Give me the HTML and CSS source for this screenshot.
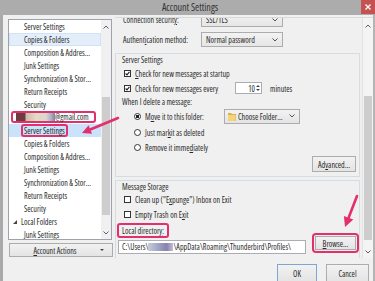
FILE: index.html
```html
<!DOCTYPE html>
<html>
  <head>
    <meta charset="utf-8">
    <title>Account Settings</title>
    <link rel="stylesheet" href="styles.css">
  </head>
  <body>
    <div class="window">
      <div class="titlebar">
        <span class="title">Account Settings</span>
        <span class="close">
          <svg width="6" height="6" viewBox="0 0 6 6"><path d="M.5.5l5 5M5.5.5l-5 5" stroke="#fff" stroke-width="1.3"/></svg>
        </span>
      </div>

      <div class="frame">
        <div class="main">
          <div class="side">
            <div class="tree">
              <ul class="items">
                <li class="sub">Server Settings</li>
                <li class="sub hover">Copies &amp; Folders</li>
                <li class="sub">Composition &amp; Addres...</li>
                <li class="sub">Junk Settings</li>
                <li class="sub">Synchronization &amp; Stor...</li>
                <li class="sub">Return Receipts</li>
                <li class="sub">Security</li>
                <li class="account"><span class="mark acc"><span class="blur"></span>@gmail.com</span></li>
                <li class="sub selected"><span class="mark">Server Settings</span></li>
                <li class="sub">Copies &amp; Folders</li>
                <li class="sub">Composition &amp; Addres...</li>
                <li class="sub">Junk Settings</li>
                <li class="sub">Synchronization &amp; Stor...</li>
                <li class="sub">Return Receipts</li>
                <li class="sub">Security</li>
                <li class="root"><span class="twisty"></span>Local Folders</li>
                <li class="sub">Junk Settings</li>
              </ul>
              <div class="sbar">
                <div class="arrow up"><svg width="6" height="4" viewBox="0 0 6 4"><path d="M.5 3.5 3 1l2.5 2.5" fill="none" stroke="#606060"/></svg></div>
                <div class="track"><div class="thumb t-tree"></div></div>
                <div class="arrow dn"><svg width="6" height="4" viewBox="0 0 6 4"><path d="M.5.5 3 3 5.5.5" fill="none" stroke="#606060"/></svg></div>
              </div>
            </div>
            <button class="btn actions"><span class="lbl-c"><u>A</u>ccount Actions</span><span class="caret"></span></button>
          </div>

          <div class="pane">
            <div class="content">
              <div class="inner">
                <div class="row">
                  <span class="lbl">Connection securit<u>y</u>:</span>
                  <span class="select">SSL/TLS<svg width="6" height="4" viewBox="0 0 6 4"><path d="M.5.5 3 3 5.5.5" fill="none" stroke="#555"/></svg></span>
                </div>
                <div class="row">
                  <span class="lbl">Authent<u>i</u>cation method:</span>
                  <span class="select">Normal password<svg width="6" height="4" viewBox="0 0 6 4"><path d="M.5.5 3 3 5.5.5" fill="none" stroke="#555"/></svg></span>
                </div>

                <section class="group g1">
                  <div class="legend">Server Settings</div>
                  <div class="check c1"><span class="box on"><svg width="5" height="5" viewBox="0 0 5 5"><path d="M.6 2.5 2 3.9 4.4.9" fill="none" stroke="#222" stroke-width="1.1"/></svg></span><u>C</u>heck for new messages at startup</div>
                  <div class="check c2">
                    <span class="box on"><svg width="5" height="5" viewBox="0 0 5 5"><path d="M.6 2.5 2 3.9 4.4.9" fill="none" stroke="#222" stroke-width="1.1"/></svg></span>
                    <span class="every">Check for new messages ever<u>y</u></span>
                    <span class="spin"><span class="num">10</span><span class="spins"><i class="s-up"></i><i class="s-dn"></i></span></span>
                    <span class="unit">minutes</span>
                  </div>
                  <div class="when">When I delete a message:</div>
                  <div class="radio r1">
                    <span class="dot on"></span>
                    <span class="move">M<u>o</u>ve it to this folder:</span>
                    <span class="picker">
                      <svg width="8" height="9" viewBox="0 0 8 9"><path d="M0 1h3l1 1h4v7H0z" fill="#d9b24a"/><path d="M0 3h7.5v6H0z" fill="#f3d47c"/></svg>
                      <span class="pick-t">Choose Folder...</span>
                      <svg width="6" height="4" viewBox="0 0 6 4"><path d="M.5.5 3 3 5.5.5" fill="none" stroke="#555"/></svg>
                    </span>
                  </div>
                  <div class="radio r2"><span class="dot"></span>Just mar<u>k</u> it as deleted</div>
                  <div class="radio r3"><span class="dot"></span>Remove it imme<u>d</u>iately</div>
                  <div class="adv-row"><button class="btn adv">Ad<u>v</u>anced...</button></div>
                </section>

                <section class="group g2">
                  <div class="legend">Message Storage</div>
                  <div class="check c3"><span class="box"></span>Clean up ("E<u>x</u>punge") Inbox on Exit</div>
                  <div class="check c4"><span class="box"></span>Empty Trash on E<u>x</u>it</div>
                  <div class="dir-row"><span class="mark dir">Local director<u>y</u>:</span></div>
                  <div class="path-row">
                    <span class="path">C:\Users\<span class="smudge"></span>\AppData\Roaming\Thunderbird\Profiles\</span>
                    <span class="mark browse-wrap"><button class="btn browse"><u>B</u>rowse...</button></span>
                  </div>
                </section>
              </div>
            </div>
            <div class="sbar wide">
              <div class="arrow up"><svg width="6" height="4" viewBox="0 0 6 4"><path d="M.5 3.5 3 1l2.5 2.5" fill="none" stroke="#606060"/></svg></div>
              <div class="track"><div class="thumb t-pane"></div></div>
              <div class="arrow dn"><svg width="6" height="4" viewBox="0 0 6 4"><path d="M.5.5 3 3 5.5.5" fill="none" stroke="#606060"/></svg></div>
            </div>
          </div>
        </div>

        <div class="footer">
          <button class="btn ok">OK</button>
          <button class="btn cancel">Cancel</button>
        </div>
      </div>

      <!-- annotation arrows drawn over the dialog -->
      <svg class="notes" width="375" height="281" viewBox="0 0 375 281">
        <path d="M118 118 90.3 129.5" stroke="#e3306c" stroke-width="2.6" stroke-linecap="round"/>
        <path d="M82 133 92 133.7 88.6 125.3z" fill="#e3306c"/>
        <path d="M357 196 348.6 217.7" stroke="#e3306c" stroke-width="2.6" stroke-linecap="round"/>
        <path d="M345 227 353.3 219.5 343.9 215.9z" fill="#e3306c"/>
      </svg>
    </div>
  </body>
</html>
```

FILE: styles.css
```css
  *{
    margin: 0;
    padding: 0;
    box-sizing: border-box;
  }
  body{
    width: 375px;
    height: 281px;
    overflow: hidden;
    background: #f0f0f0;
    font-family: "Open Sans", "Noto Sans", sans-serif;
    font-size: 8px;
    font-stretch: 80%;
    line-height: 11px;
    color: #2a2a2a;
  }
  button{
    font: inherit;
    color: inherit;
  }
  .window{
    position: relative;
    width: 375px;
    height: 281px;
    display: flex;
    flex-direction: column;
  }

  /* title bar */
  .titlebar{
    height: 15px;
    background: #acacac;
    display: flex;
  }
  .title{
    flex: 1;
    text-align: center;
    padding-left: 19px;
    font-size: 10px;
    line-height: 15px;
    color: #333;
  }
  .close{
    width: 14px;
    height: 14px;
    background: #c75050;
    display: flex;
    align-items: center;
    justify-content: center;
  }

  .frame{
    flex: 1;
    display: flex;
    flex-direction: column;
    border-left: 3px solid #a9a9a9;
    border-right: 2px solid #b4b4b4;
  }
  .main{
    display: flex;
    height: 246px;
    padding-top: 2px;
  }

  /* left side: account tree */
  .side{
    width: 110px;
    padding: 2px 0 0 5px;
  }
  .tree{
    width: 104px;
    height: 221px;
    border: 1px solid #9ea3ab;
    background: #fff;
    display: flex;
    overflow: hidden;
  }
  .items{
    width: 92px;
    list-style: none;
  }
  .items li{
    height: 13px;
    line-height: 13px;
    white-space: nowrap;
    overflow: hidden;
  }
  .sub{ padding-left: 15px; }
  .hover{
    background: #e3eefa;
    box-shadow: inset 0 0 0 1px #d0e2f5;
  }
  .selected{
    background: #cbe3fa;
    padding-left: 12px;
  }
  .mark{
    display: inline-block;
    border: 2px solid #e2306c;
    border-radius: 3px;
    line-height: 9px;
    padding: 0 1px;
  }
  .account{ padding-left: 2px; }
  .acc{
    width: 85px;
    padding-left: 3px;
    line-height: 8px;
    vertical-align: top;
    margin-top: 0;
  }
  .blur{
    display: inline-block;
    width: 39px;
    height: 8px;
    vertical-align: top;
    background: linear-gradient(to right, #6c3c42 0, #6c3c42 9px, #cbbcaa 10px, #e4dac5 20px, #d9d7cf 30px, #aab1c6 35px, #7b85aa 39px);
  }
  .root{ padding-left: 3px; }
  .twisty{
    display: inline-block;
    width: 0;
    height: 0;
    border-left: 4px solid transparent;
    border-bottom: 4px solid #444;
    margin: 0 4px 1px 1px;
  }

  /* scrollbars */
  .sbar{
    width: 10px;
    background: #f0f0f0;
    display: flex;
    flex-direction: column;
  }
  .arrow{
    height: 13px;
    display: flex;
    align-items: center;
    justify-content: center;
  }
  .track{ flex: 1; }
  .thumb{
    background: #cdcdcd;
    margin: 0 1px;
  }
  .t-tree{
    margin-top: 64px;
    height: 118px;
  }
  .wide{
    width: 11px;
    background: #f4f4f4;
    border-left: 1px solid #e2e2e2;
  }
  .wide .up{ height: 16px; }
  .wide .dn{ height: 12px; }
  .t-pane{
    margin-top: 62px;
    height: 144px;
  }

  /* buttons */
  .btn{
    border: 1px solid #acacac;
    background: linear-gradient(#f2f2f2, #e4e4e4);
    display: flex;
    align-items: center;
    justify-content: center;
    line-height: 11px;
  }
  .actions{
    width: 104px;
    height: 14px;
    margin: 3px 0 0 1px;
  }
  .lbl-c{
    flex: 1;
    text-align: center;
  }
  .caret{
    width: 0;
    height: 0;
    border-left: 2px solid transparent;
    border-right: 2px solid transparent;
    border-top: 2px solid #444;
    margin-right: 8px;
  }

  /* right side: settings pane */
  .pane{
    flex: 1;
    margin-left: 2px;
    height: 241px;
    border-top: 1px solid #dadada;
    display: flex;
  }
  .content{
    flex: 1;
    overflow: hidden;
  }
  .inner{ margin-top: -6px; }
  .row{
    display: flex;
    align-items: center;
    height: 15px;
    padding-left: 8px;
  }
  .row + .row{ margin-top: 5px; }
  .lbl{ width: 78px; white-space: nowrap; }
  .select{
    width: 82px;
    height: 15px;
    border: 1px solid #acacac;
    background: linear-gradient(#f3f3f3, #e6e6e6);
    display: flex;
    align-items: center;
    justify-content: space-between;
    padding: 0 4px;
  }

  .group{
    width: 245px;
    border: 1px solid #d5dde3;
    padding: 0 3px 4px 0;
  }
  .g1{ margin-top: 6px; }
  .g2{
    margin-top: 3px;
    height: 90px;
  }
  .legend{
    height: 12px;
    line-height: 12px;
    padding-left: 6px;
  }
  .g2 .legend{ height: 11px; }
  .check{
    display: flex;
    align-items: center;
    height: 14px;
    padding-left: 8px;
    white-space: nowrap;
  }
  .c2, .c4{ height: 16px; }
  .box{
    width: 7px;
    height: 7px;
    border: 1px solid #333;
    background: #fff;
    margin-right: 4px;
    display: flex;
    align-items: center;
    justify-content: center;
    flex-shrink: 0;
  }
  .every{ width: 100px; }
  .spin{
    width: 27px;
    height: 12px;
    border: 1px solid #abadb3;
    background: #fff;
    display: flex;
    align-items: center;
    justify-content: flex-end;
  }
  .spins{
    width: 6px;
    display: flex;
    flex-direction: column;
    align-items: center;
    gap: 2px;
  }
  .spins i{
    width: 0;
    height: 0;
    border-left: 2px solid transparent;
    border-right: 2px solid transparent;
  }
  .s-up{ border-bottom: 2px solid #444; }
  .s-dn{ border-top: 2px solid #444; }
  .unit{ margin-left: 8px; }
  .when{
    height: 12px;
    line-height: 12px;
    padding-left: 6px;
  }
  .radio{
    display: flex;
    align-items: center;
    height: 16px;
    padding-left: 18px;
    white-space: nowrap;
  }
  .r3{ height: 14px; }
  .dot{
    width: 7px;
    height: 7px;
    border: 1px solid #333;
    border-radius: 50%;
    background: #fff;
    margin-right: 4px;
    flex-shrink: 0;
  }
  .dot.on{ background: radial-gradient(circle, #222 0, #222 1.5px, #fff 2px); }
  .move{ width: 79px; }
  .picker{
    width: 76px;
    height: 15px;
    border: 1px solid #acacac;
    background: linear-gradient(#f2f2f2, #e4e4e4);
    display: flex;
    align-items: center;
    padding: 0 4px 0 3px;
  }
  .pick-t{
    flex: 1;
    margin-left: 2px;
  }
  .adv-row{
    display: flex;
    justify-content: flex-end;
    margin-top: 2px;
  }
  .adv{
    width: 44px;
    height: 16px;
  }
  .dir-row{
    height: 15px;
    margin-top: 1px;
    padding-left: 1px;
  }
  .dir{
    line-height: 11px;
    padding: 0 3px;
  }
  .path-row{
    display: flex;
    align-items: flex-end;
    height: 21px;
    margin: -5px -3px 0 0;
    padding-left: 2px;
  }
  .path{
    width: 188px;
    height: 14px;
    flex-shrink: 0;
    border: 1px solid #abadb3;
    background: #fff;
    line-height: 12px;
    padding-left: 3px;
    white-space: nowrap;
    overflow: hidden;
  }
  .smudge{
    display: inline-block;
    width: 25px;
    height: 8px;
    vertical-align: -1px;
    background: linear-gradient(to right, #c9ccd8, #9fa6c4 40%, #8b7fae 75%, #c3bfd6);
  }
  .browse-wrap{
    flex-shrink: 0;
    margin: 0 0 1px 6px;
    padding: 1px;
    border-radius: 4px;
  }
  .browse{
    width: 41px;
    height: 14px;
  }

  /* bottom buttons */
  .footer{
    flex: 1;
    display: flex;
    justify-content: flex-end;
    gap: 9px;
    padding: 3px 4px 0 0;
  }
  .ok, .cancel{ height: 18px; }
  .ok{
    width: 40px;
    border-color: #7ea6d2;
  }
  .cancel{ width: 43px; }

  .notes{
    position: absolute;
    left: 0;
    top: 0;
    pointer-events: none;
  }
```
